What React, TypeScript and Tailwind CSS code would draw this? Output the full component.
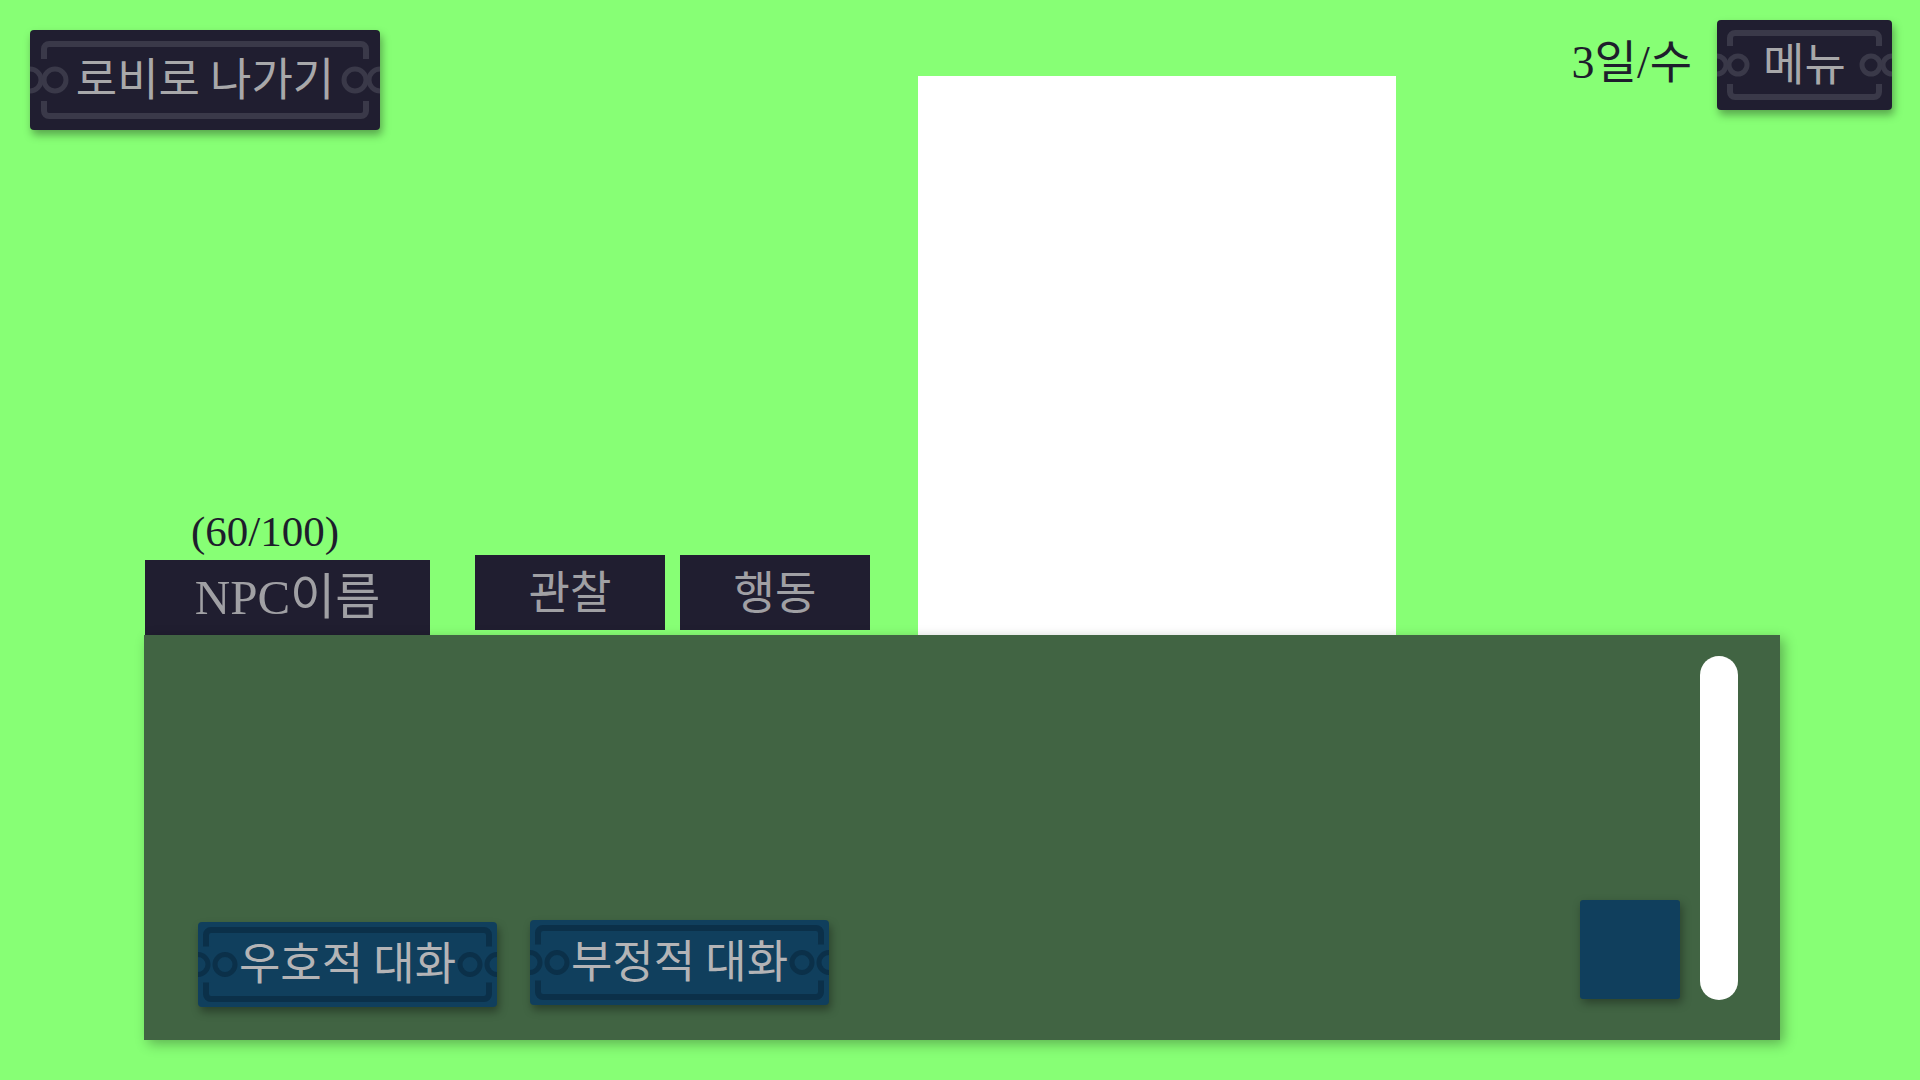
import type { ReactNode } from 'react'

// decorated button: bracket frame with chain rings cut into both short sides
function FramedButton({
  w,
  h,
  inset,
  ringR,
  ringX,
  gap,
  bg,
  stroke,
  className = '',
  children,
}: {
  w: number
  h: number
  inset: number
  ringR: number
  ringX: number
  gap: number
  bg: string
  stroke: string
  className?: string
  children: ReactNode
}) {
  const t = 6
  const cy = h / 2
  const rr = ringR - t / 2

  return (
    <button type="button" className={`relative flex shrink-0 items-center justify-center overflow-hidden rounded-[4px] ${className}`}>
      <svg className="absolute inset-0" width={w} height={h} viewBox={`0 0 ${w} ${h}`}>
        <rect x={inset + t / 2} y={inset + t / 2} width={w - 2 * inset - t} height={h - 2 * inset - t} rx={5} fill="none" stroke={stroke} strokeWidth={t} />
        <rect x={inset - 2} y={cy - gap} width={t + 4} height={gap * 2} fill={bg} />
        <rect x={w - inset - t - 2} y={cy - gap} width={t + 4} height={gap * 2} fill={bg} />
        <circle cx={0} cy={cy} r={rr} fill="none" stroke={stroke} strokeWidth={t - 1} />
        <circle cx={ringX} cy={cy} r={rr} fill="none" stroke={stroke} strokeWidth={t - 1} />
        <circle cx={w} cy={cy} r={rr} fill="none" stroke={stroke} strokeWidth={t - 1} />
        <circle cx={w - ringX} cy={cy} r={rr} fill="none" stroke={stroke} strokeWidth={t - 1} />
      </svg>
      <span className="relative -translate-y-[4px] font-['Noto_Sans_CJK_KR',sans-serif] text-[45px] leading-none">{children}</span>
    </button>
  )
}

function Tab({ children, className = '' }: { children: ReactNode; className?: string }) {
  return (
    <div className={`flex h-[75px] shrink-0 items-center justify-center bg-[#201e30] text-[#a0a0a4] ${className}`}>
      {children}
    </div>
  )
}

export default function App() {
  return (
    <div className="flex h-[1080px] w-[1920px] flex-col overflow-hidden bg-[#87ff75]">
      <div className="flex h-[635px] shrink-0">
        {/* left: lobby button + npc tabs */}
        <div className="flex w-[918px] shrink-0 flex-col justify-between">
          <div className="pl-[30px] pt-[30px]">
            <FramedButton
              w={350}
              h={100}
              inset={11}
              ringR={14}
              ringX={25}
              gap={21}
              bg="#201e30"
              stroke="#3a3949"
              className="h-[100px] w-[350px] bg-[#201e30] text-[#a8a8aa] shadow-[2px_5px_8px_rgba(0,0,0,0.35)]"
            >
              로비로 나가기
            </FramedButton>
          </div>

          <div className="pl-[145px]">
            <p className="ml-[46px] h-[40px] -translate-y-[3px] font-['Liberation_Serif','Noto_Sans_CJK_KR',serif] text-[43px] leading-[40px] text-[#1e1d2c]">
              (60/100)
            </p>
            <div className="flex items-start">
              <Tab className="mt-[5px] w-[285px] font-['Liberation_Serif','Noto_Sans_CJK_KR',serif] text-[49px]">NPC이름</Tab>
              <Tab className="ml-[45px] w-[190px]">
                <span className="-translate-y-[3px] font-['Noto_Sans_CJK_KR',sans-serif] text-[45px] leading-none">관찰</span>
              </Tab>
              <Tab className="ml-[15px] w-[190px]">
                <span className="-translate-y-[3px] font-['Noto_Sans_CJK_KR',sans-serif] text-[45px] leading-none">행동</span>
              </Tab>
            </div>
          </div>
        </div>

        {/* npc portrait */}
        <div className="mt-[76px] w-[478px] shrink-0 bg-white" />

        {/* right: day + menu */}
        <div className="flex flex-1 items-start justify-end pr-[28px] pt-[20px]">
          <div className="flex items-center gap-[25px]">
            <span className="-translate-y-[2px] font-['Liberation_Serif','Noto_Sans_CJK_KR',serif] text-[46px] leading-none text-[#1e1d2c]">3일/수</span>
            <FramedButton
              w={175}
              h={90}
              inset={10}
              ringR={12}
              ringX={21}
              gap={19}
              bg="#201e30"
              stroke="#3a3949"
              className="h-[90px] w-[175px] bg-[#201e30] text-[#a8a8aa] shadow-[2px_5px_8px_rgba(0,0,0,0.35)]"
            >
              메뉴
            </FramedButton>
          </div>
        </div>
      </div>

      {/* dialogue panel */}
      <div className="ml-[144px] flex h-[405px] w-[1636px] shrink-0 bg-[#416443] pb-[33px] pl-[54px] pr-[42px] pt-[21px] shadow-[4px_4px_12px_rgba(0,0,0,0.3)]">
        <div className="flex items-end gap-[33px] self-end">
          <FramedButton
            w={299}
            h={85}
            inset={5}
            ringR={13}
            ringX={27}
            gap={18}
            bg="#103f5d"
            stroke="#0b3049"
            className="h-[85px] w-[299px] bg-[#103f5d] text-[#b4b4b6] shadow-[2px_5px_8px_rgba(0,0,0,0.35)]"
          >
            우호적 대화
          </FramedButton>
          <FramedButton
            w={299}
            h={85}
            inset={5}
            ringR={13}
            ringX={27}
            gap={18}
            bg="#103f5d"
            stroke="#0b3049"
            className="mb-[2px] h-[85px] w-[299px] bg-[#103f5d] text-[#b4b4b6] shadow-[2px_5px_8px_rgba(0,0,0,0.35)]"
          >
            부정적 대화
          </FramedButton>
        </div>
        <div className="flex-1" />
        <div className="mb-[8px] h-[99px] w-[100px] self-end rounded-[3px] bg-[#103f5d] shadow-[2px_4px_10px_rgba(0,0,0,0.35)]" />
        <div className="mb-[7px] ml-[20px] w-[38px] rounded-full bg-white" />
      </div>
    </div>
  )
}
